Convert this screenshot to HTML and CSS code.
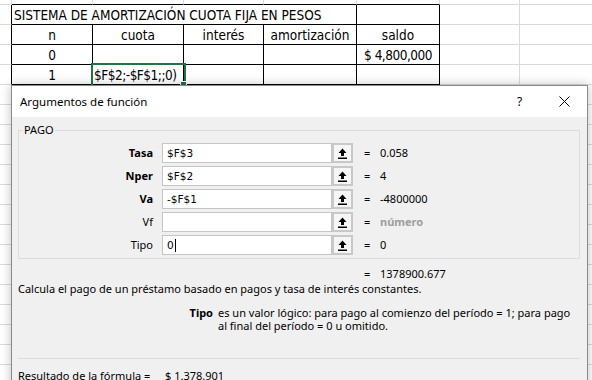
FILE: index.html
```html
<!DOCTYPE html>
<html>
<head>
    <meta charset="utf-8">
    <title>Argumentos de función</title>
    <link rel="stylesheet" href="styles.css">
</head>
<body>
    <!-- hoja de cálculo -->
    <div class="sheet">
        <div class="cell"></div>
        <div class="cell bb"></div>
        <div class="cell bb"></div>
        <div class="cell bb"></div>
        <div class="cell bb"></div>
        <div class="cell bb"></div>
        <div class="cell"></div>
        <div class="cell"></div>

        <div class="cell br"></div>
        <div class="cell br bb title-cell">SISTEMA DE AMORTIZACIÓN CUOTA FIJA EN PESOS</div>
        <div class="cell br bb"></div>
        <div class="cell"></div>
        <div class="cell"></div>

        <div class="cell br"></div>
        <div class="cell br bb">n</div>
        <div class="cell br bb">cuota</div>
        <div class="cell br bb">interés</div>
        <div class="cell br bb">amortización</div>
        <div class="cell br bb">saldo</div>
        <div class="cell"></div>
        <div class="cell"></div>

        <div class="cell br"></div>
        <div class="cell br bb">0</div>
        <div class="cell br bb"></div>
        <div class="cell br bb"></div>
        <div class="cell br bb"></div>
        <div class="cell br bb num">$ 4,800,000</div>
        <div class="cell"></div>
        <div class="cell"></div>

        <div class="cell br"></div>
        <div class="cell br bb">1</div>
        <div class="cell br bb num active">$F$2;-$F$1;;0)</div>
        <div class="cell br bb"></div>
        <div class="cell br bb"></div>
        <div class="cell br bb"></div>
        <div class="cell"></div>
        <div class="cell"></div>

        <div class="rest"></div>
    </div>

    <!-- cuadro de diálogo -->
    <div class="dialog">
        <div class="titlebar">
            <span class="title">Argumentos de función</span>
            <span class="cap-btn">?</span>
            <span class="cap-btn">
                <svg width="11" height="11" viewBox="0 0 11 11">
                    <path d="M0.5 0.5 L10.5 10.5 M10.5 0.5 L0.5 10.5" stroke="#000" stroke-width="1" fill="none"/>
                </svg>
            </span>
        </div>

        <div class="content">
            <fieldset class="group">
                <legend>PAGO</legend>
                <div class="args">
                    <label class="arg-name req">Tasa</label>
                    <div class="arg-input">$F$3</div>
                    <div class="ref-btn"><svg width="9" height="11" viewBox="0 0 9 11"><path d="M4.5 0.5 L8.5 5 L6 5 L6 8 L3 8 L3 5 L0.5 5 Z" fill="#000"/><rect x="0" y="9.5" width="9" height="1.5" fill="#000"/></svg></div>
                    <div class="arg-value"><span class="eq">=</span>0.058</div>

                    <label class="arg-name req">Nper</label>
                    <div class="arg-input">$F$2</div>
                    <div class="ref-btn"><svg width="9" height="11" viewBox="0 0 9 11"><path d="M4.5 0.5 L8.5 5 L6 5 L6 8 L3 8 L3 5 L0.5 5 Z" fill="#000"/><rect x="0" y="9.5" width="9" height="1.5" fill="#000"/></svg></div>
                    <div class="arg-value"><span class="eq">=</span>4</div>

                    <label class="arg-name req">Va</label>
                    <div class="arg-input">-$F$1</div>
                    <div class="ref-btn"><svg width="9" height="11" viewBox="0 0 9 11"><path d="M4.5 0.5 L8.5 5 L6 5 L6 8 L3 8 L3 5 L0.5 5 Z" fill="#000"/><rect x="0" y="9.5" width="9" height="1.5" fill="#000"/></svg></div>
                    <div class="arg-value"><span class="eq">=</span>-4800000</div>

                    <label class="arg-name">Vf</label>
                    <div class="arg-input"></div>
                    <div class="ref-btn"><svg width="9" height="11" viewBox="0 0 9 11"><path d="M4.5 0.5 L8.5 5 L6 5 L6 8 L3 8 L3 5 L0.5 5 Z" fill="#000"/><rect x="0" y="9.5" width="9" height="1.5" fill="#000"/></svg></div>
                    <div class="arg-value"><span class="eq">=</span><span class="hint">número</span></div>

                    <label class="arg-name">Tipo</label>
                    <div class="arg-input">0<span class="caret"></span></div>
                    <div class="ref-btn"><svg width="9" height="11" viewBox="0 0 9 11"><path d="M4.5 0.5 L8.5 5 L6 5 L6 8 L3 8 L3 5 L0.5 5 Z" fill="#000"/><rect x="0" y="9.5" width="9" height="1.5" fill="#000"/></svg></div>
                    <div class="arg-value"><span class="eq">=</span>0</div>
                </div>
            </fieldset>

            <div class="args result">
                <span></span><span></span><span></span>
                <div class="arg-value"><span class="eq">=</span>1378900.677</div>
            </div>

            <p class="summary">Calcula el pago de un préstamo basado en pagos y tasa de interés constantes.</p>

            <div class="help">
                <span class="help-name">Tipo</span>
                <span class="help-text">es un valor lógico: para pago al comienzo del período = 1; para pago<br>al final del período = 0 u omitido.</span>
            </div>

            <div class="separator"></div>

            <div class="formula-result">
                <span class="fr-label">Resultado de la fórmula =</span>
                <span>$ 1.378.901</span>
            </div>
        </div>
    </div>
</body>
</html>
```

FILE: styles.css
```css
body {
    margin: 0;
    width: 592px;
    height: 380px;
    overflow: hidden;
    position: relative;
    background: #fff;
}

/* hoja */
.sheet {
    display: grid;
    grid-template-columns: 12px 81px 91px 80px 93px 83px 80px 80px;
    grid-template-rows: 5px repeat(5, 20px);
    font-family: "Liberation Sans Narrow", "DejaVu Sans Condensed", "Liberation Sans", sans-serif;
    font-size: 13.5px;
    color: #000;
}
.cell {
    box-sizing: border-box;
    border-right: 1px solid #dadada;
    border-bottom: 1px solid #dadada;
    display: flex;
    align-items: center;
    justify-content: center;
    white-space: nowrap;
    overflow: hidden;
}
.br {
    border-right-color: #000;
}
.bb {
    border-bottom-color: #000;
}
.num {
    letter-spacing: -0.5px;
}
.title-cell {
    grid-column: span 4;
    justify-content: flex-start;
    padding-left: 2px;
}
.active {
    position: relative;
    justify-content: flex-start;
    padding-left: 1px;
    overflow: visible;
    outline: 2px solid #217346;
    outline-offset: 0;
}
.active::after {
    content: "";
    position: absolute;
    right: -4px;
    bottom: -4px;
    width: 5px;
    height: 5px;
    background: #217346;
    border: 1px solid #fff;
}
.rest {
    grid-column: 1 / -1;
    height: 300px;
    background: repeating-linear-gradient(to bottom, #fff 0 19px, #dadada 19px 20px);
}

/* diálogo */
.dialog {
    position: absolute;
    left: 11px;
    top: 85px;
    width: 577px;
    height: 320px;
    box-sizing: border-box;
    border: 1px solid #8a8a8a;
    background: #f0f0f0;
    box-shadow: 0 0 10px rgba(0,0,0,0.25);
    font-family: "Noto Sans", "Open Sans", sans-serif;
    font-size: 11px;
    color: #000;
}
.titlebar {
    height: 31px;
    background: #fff;
    display: flex;
    align-items: center;
    padding-left: 8px;
}
.title {
    flex: 1;
    font-size: 11.5px;
}
.cap-btn {
    width: 45px;
    height: 31px;
    display: flex;
    align-items: center;
    justify-content: center;
    font-size: 12px;
}
.content {
    padding: 0 7px 0 6px;
}
.group {
    margin: 6px 0 0 0;
    padding: 6px 0 3px 0;
    border: 1px solid #dcdcdc;
}
.group legend {
    padding: 0 1px;
    margin-left: 4px;
    line-height: 14px;
}
.args {
    display: grid;
    grid-template-columns: 143px 170px 21px 1fr;
    grid-auto-rows: 20px;
    row-gap: 3px;
}
.arg-name {
    text-align: right;
    padding-right: 9px;
    line-height: 20px;
}
.req {
    font-weight: bold;
}
.arg-input {
    box-sizing: border-box;
    background: #fff;
    border: 1px solid #c5c5c5;
    font-family: "DejaVu Sans", sans-serif;
    font-size: 10.5px;
    line-height: 18px;
    padding-left: 4px;
    display: flex;
    align-items: center;
}
.caret {
    display: inline-block;
    width: 1px;
    height: 13px;
    background: #000;
    margin-left: 1px;
}
.ref-btn {
    box-sizing: border-box;
    border: 2px solid #c8c8c8;
    background: #f6f6f6;
    display: flex;
    align-items: center;
    justify-content: center;
}
.arg-value {
    padding-left: 11px;
    line-height: 20px;
    white-space: nowrap;
}
.eq {
    display: inline-block;
    width: 16px;
}
.hint {
    color: #9d9d9d;
    font-weight: bold;
}
.result {
    margin: 5px 0 0 1px;
}
.summary {
    margin: -3px 0 0 0;
}
.help {
    display: flex;
    margin-top: 10px;
    line-height: 13px;
}
.help-name {
    width: 195px;
    margin-right: 5px;
    text-align: right;
    font-weight: bold;
}
.separator {
    margin-top: 26px;
    border-top: 1px solid #dcdcdc;
}
.formula-result {
    margin-top: 9px;
    display: flex;
}
.fr-label {
    width: 147px;
}
```
